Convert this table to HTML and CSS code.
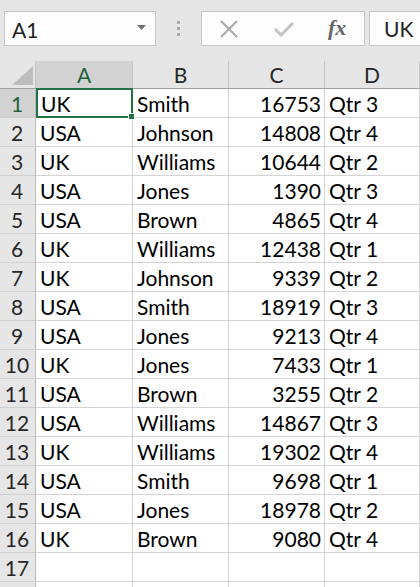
FILE: index.html
```html
<!DOCTYPE html>
<html>
<head>
<meta charset="utf-8">
<link rel="stylesheet" href="styles.css">
</head>
<body>
<div class="toolbar">
  <div class="namebox">
    <span class="name">A1</span>
    <svg class="caret" width="9" height="5" viewBox="0 0 9 5"><polygon points="0,0 9,0 4.5,5" fill="#6f6f6f"/></svg>
  </div>
  <div class="dots"><i></i><i></i><i></i></div>
  <div class="fbuttons">
    <svg class="ico" width="18" height="18" viewBox="0 0 18 18"><path d="M1 1 L17 17 M17 1 L1 17" stroke="#a8a8a8" stroke-width="2" fill="none"/></svg>
    <svg class="ico" width="20" height="16" viewBox="0 0 20 16"><path d="M1 8 L7 14 L19 2" stroke="#c4c4c4" stroke-width="3" fill="none"/></svg>
    <span class="fx">fx</span>
  </div>
  <div class="fcontent">UK</div>
</div>
<div class="sheet">
  <div class="hdr corner"><svg width="21" height="19" viewBox="0 0 21 19"><polygon points="0,19 21,19 21,0" fill="#bdbdbd"/></svg></div>
  <div class="hdr col sel">A</div>
  <div class="hdr col">B</div>
  <div class="hdr col">C</div>
  <div class="hdr col">D</div>

  <div class="hdr row sel">1</div><div class="cell active">UK<span class="selbox"><i class="handle"></i></span></div><div class="cell">Smith</div><div class="cell num">16753</div><div class="cell">Qtr 3</div>
  <div class="hdr row">2</div><div class="cell">USA</div><div class="cell">Johnson</div><div class="cell num">14808</div><div class="cell">Qtr 4</div>
  <div class="hdr row">3</div><div class="cell">UK</div><div class="cell">Williams</div><div class="cell num">10644</div><div class="cell">Qtr 2</div>
  <div class="hdr row">4</div><div class="cell">USA</div><div class="cell">Jones</div><div class="cell num">1390</div><div class="cell">Qtr 3</div>
  <div class="hdr row">5</div><div class="cell">USA</div><div class="cell">Brown</div><div class="cell num">4865</div><div class="cell">Qtr 4</div>
  <div class="hdr row">6</div><div class="cell">UK</div><div class="cell">Williams</div><div class="cell num">12438</div><div class="cell">Qtr 1</div>
  <div class="hdr row">7</div><div class="cell">UK</div><div class="cell">Johnson</div><div class="cell num">9339</div><div class="cell">Qtr 2</div>
  <div class="hdr row">8</div><div class="cell">USA</div><div class="cell">Smith</div><div class="cell num">18919</div><div class="cell">Qtr 3</div>
  <div class="hdr row">9</div><div class="cell">USA</div><div class="cell">Jones</div><div class="cell num">9213</div><div class="cell">Qtr 4</div>
  <div class="hdr row">10</div><div class="cell">UK</div><div class="cell">Jones</div><div class="cell num">7433</div><div class="cell">Qtr 1</div>
  <div class="hdr row">11</div><div class="cell">USA</div><div class="cell">Brown</div><div class="cell num">3255</div><div class="cell">Qtr 2</div>
  <div class="hdr row">12</div><div class="cell">USA</div><div class="cell">Williams</div><div class="cell num">14867</div><div class="cell">Qtr 3</div>
  <div class="hdr row">13</div><div class="cell">UK</div><div class="cell">Williams</div><div class="cell num">19302</div><div class="cell">Qtr 4</div>
  <div class="hdr row">14</div><div class="cell">USA</div><div class="cell">Smith</div><div class="cell num">9698</div><div class="cell">Qtr 1</div>
  <div class="hdr row">15</div><div class="cell">USA</div><div class="cell">Jones</div><div class="cell num">18978</div><div class="cell">Qtr 2</div>
  <div class="hdr row">16</div><div class="cell">UK</div><div class="cell">Brown</div><div class="cell num">9080</div><div class="cell">Qtr 4</div>
  <div class="hdr row">17</div><div class="cell"></div><div class="cell"></div><div class="cell num"></div><div class="cell"></div>
  <div class="hdr row"></div><div class="cell"></div><div class="cell"></div><div class="cell num"></div><div class="cell"></div>
</div>
</body>
</html>
```

FILE: styles.css
```css
html, body {
  margin: 0;
  padding: 0;
  background: #e6e6e6;
  overflow: hidden;
}
body {
  width: 420px;
  height: 587px;
  font-family: Lato, "Open Sans", sans-serif;
  color: #000;
}
.toolbar {
  height: 61px;
  box-sizing: border-box;
  padding: 11px 0 0 4px;
  display: flex;
  align-items: flex-start;
  background: #e6e6e6;
  white-space: nowrap;
}
.namebox {
  width: 152px;
  height: 35px;
  box-sizing: border-box;
  border: 1px solid #c6c6c6;
  background: #fdfdfd;
  display: flex;
  align-items: center;
  justify-content: space-between;
  padding: 0 9px 0 7px;
  flex: none;
}
.name {
  font-size: 21px;
  color: #222;
  margin-top: 1px;
}
.caret {
  display: block;
  margin-top: -2px;
}
.dots {
  width: 45px;
  height: 35px;
  display: flex;
  flex-direction: column;
  align-items: center;
  justify-content: center;
  gap: 3px;
  flex: none;
  padding-right: 1px;
  box-sizing: border-box;
}
.dots i {
  display: block;
  width: 3px;
  height: 3px;
  background: #a9a9a9;
}
.fbuttons {
  width: 164px;
  height: 35px;
  box-sizing: border-box;
  border: 1px solid #c6c6c6;
  background: #fdfdfd;
  display: flex;
  align-items: center;
  padding-left: 18px;
  flex: none;
}
.fbuttons .ico {
  display: block;
  flex: none;
}
.fbuttons .ico:first-child {
  margin-right: 36px;
}
.fbuttons .ico:nth-child(2) {
  margin-right: 34px;
}
.fx {
  font-family: "Liberation Serif", serif;
  font-style: italic;
  font-weight: bold;
  font-size: 22px;
  color: #666;
  margin-top: -2px;
}
.fcontent {
  margin-left: 4px;
  width: 51px;
  height: 35px;
  box-sizing: border-box;
  border: 1px solid #c6c6c6;
  border-right: none;
  background: #fdfdfd;
  font-size: 21px;
  line-height: 33px;
  padding-left: 14px;
  color: #222;
  flex: none;
  overflow: hidden;
}
.sheet {
  display: grid;
  grid-template-columns: 36px 97px 96px 96px 95px;
  grid-template-rows: 28px repeat(18, 29px);
  background: #fff;
  font-size: 21px;
}
.hdr {
  background: #e6e6e6;
  box-sizing: border-box;
  color: #262626;
  display: flex;
  align-items: flex-end;
  justify-content: center;
}
.corner {
  border-right: 1px solid #c2c2c2;
  border-bottom: 1px solid #a0a0a0;
  align-items: flex-end;
  justify-content: flex-end;
  padding: 0 2px 3px 0;
}
.corner svg {
  display: block;
}
.col {
  border-right: 1px solid #c8c8c8;
  border-bottom: 1px solid #a0a0a0;
  line-height: 26px;
}
.row {
  border-right: 1px solid #b9b9b9;
  border-bottom: 1px solid #d0d0d0;
  line-height: 27px;
  padding-right: 1px;
}
.hdr.sel {
  background: #d2d2d2;
  color: #1f5f3b;
}
.cell {
  box-sizing: border-box;
  border-right: 1px solid #d4d4d4;
  border-bottom: 1px solid #d4d4d4;
  padding: 0 4px;
  line-height: 27px;
  white-space: nowrap;
  display: flex;
  align-items: flex-end;
}
.cell.num {
  justify-content: flex-end;
  padding-right: 3px;
}
.cell.active {
  position: relative;
  padding-left: 5px;
}
.selbox {
  position: absolute;
  left: 0;
  top: -1px;
  right: -1px;
  bottom: -1px;
  border: 2px solid #217346;
}
.handle {
  position: absolute;
  right: -4px;
  bottom: -4px;
  width: 5px;
  height: 5px;
  background: #217346;
  border: 1px solid #fff;
}
```
